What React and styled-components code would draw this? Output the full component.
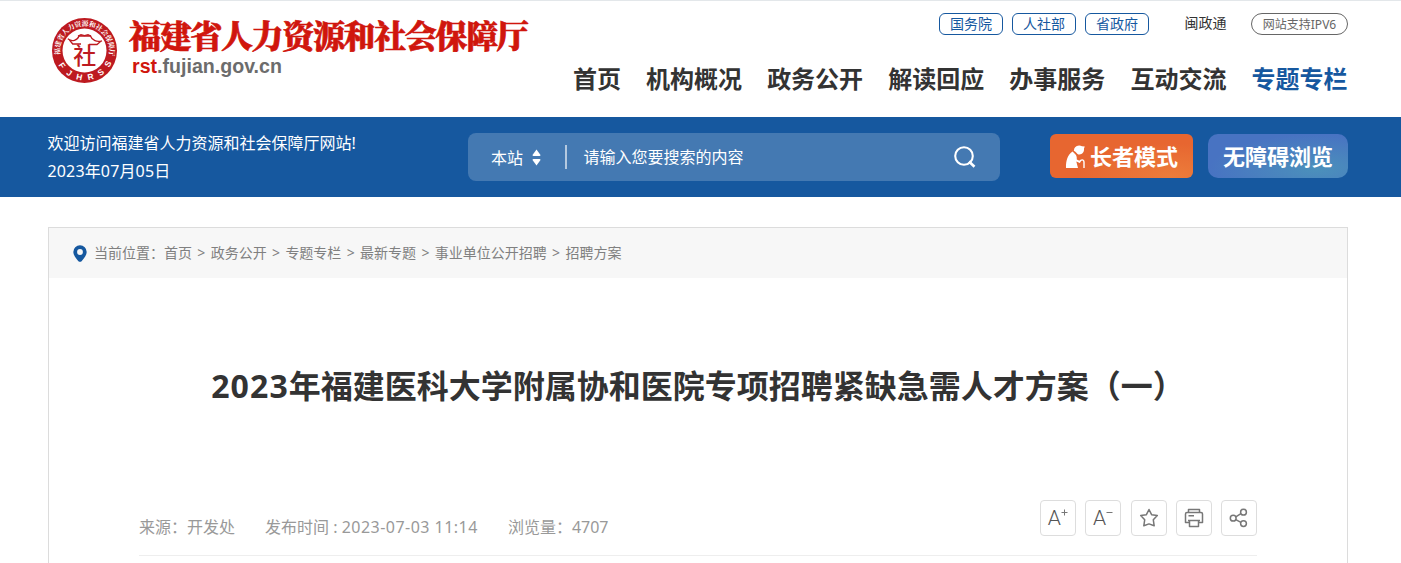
import React from 'react'
import styled, { createGlobalStyle } from 'styled-components'

const GlobalStyle = createGlobalStyle`
  * {
    box-sizing: border-box;
  }
  body {
    margin: 0;
    height: 563px;
    overflow: hidden;
    background: #fff;
    color: #333;
    font-family: "Noto Sans", "Noto Sans CJK SC", sans-serif;
    font-size: 16px;
  }
  a {
    color: inherit;
    text-decoration: none;
  }
`

const Container = styled.div`
  width: 1300px;
  margin-left: 48px;
`

const Header = styled.header`
  height: 117px;
  border-top: 1px solid #e3e7ea;
`

const HeaderInner = styled(Container)`
  display: flex;
  justify-content: space-between;
`

const Brand = styled.a`
  display: flex;
  padding: 15px 0 0 2px;
`

const BrandText = styled.div`
  padding-left: 10px;
`

const BrandName = styled.div`
  height: 40px;
  line-height: 37px;
  font-family: "Noto Serif CJK SC", "Noto Sans CJK SC", sans-serif;
  font-size: 32px;
  font-weight: 900;
  letter-spacing: -1.35px;
  white-space: nowrap;
  color: #d0160d;
  -webkit-text-stroke: 0.7px #d0160d;
`

const BrandUrl = styled.div`
  padding-left: 3px;
  line-height: 20px;
  font-family: "Liberation Sans", Arial, sans-serif;
  font-size: 19.6px;
  font-weight: bold;
  color: #6c6c6c;
  span {
    color: #d0160d;
  }
`

const HeaderRight = styled.div`
  display: flex;
  flex-direction: column;
  align-items: flex-end;
`

const TopLinks = styled.div`
  display: flex;
  padding-top: 12px;
  height: 50px;
`

const TopLink = styled.a`
  width: 64px;
  height: 22px;
  margin-right: 9px;
  border: 1px solid #16589f;
  border-radius: 6px;
  line-height: 20px;
  font-size: 14px;
  text-align: center;
  color: #16589f;
`

const PlainLink = styled.a`
  margin: 0 24.5px 0 26.5px;
  line-height: 20px;
  font-size: 14px;
`

const Ipv6 = styled.span`
  width: 97px;
  height: 22px;
  border: 1px solid #666;
  border-radius: 11px;
  line-height: 21px;
  font-size: 12px;
  text-align: center;
  color: #666;
`

const Nav = styled.nav`
  display: flex;
  gap: 25.1px;
  padding-right: 0.5px;
`

const NavItem = styled.a`
  line-height: 55px;
  font-size: 24px;
  font-weight: bold;
  color: ${({ $active }) => ($active ? '#16589f' : '#333')};
`

const BlueBar = styled.div`
  height: 80px;
  background: #16589f;
  color: #fff;
`

const BarInner = styled(Container)`
  display: flex;
  height: 80px;
`

const Welcome = styled.div`
  width: 420px;
  padding-top: 12px;
  line-height: 28px;
  p {
    margin: 0 0 0 -0.5px;
  }
`

const WelcomeDate = styled.p`
  letter-spacing: 0.15px;
`

const Search = styled.div`
  display: flex;
  align-items: center;
  width: 532px;
  height: 48px;
  margin-top: 16px;
  padding: 0 24px 0 23px;
  border-radius: 8px;
  background: rgba(255, 255, 255, 0.2);
`

const Scope = styled.div`
  display: flex;
  align-items: center;
  width: 74px;
  gap: 9px;
`

const Divider = styled.i`
  width: 2px;
  height: 24px;
  background: rgba(255, 255, 255, 0.6);
`

const Placeholder = styled.span`
  flex: 1;
  padding: 0 0 2px 16.5px;
`

const ModeButton = styled.a`
  display: flex;
  justify-content: center;
  align-items: center;
  gap: 5px;
  width: ${({ $elder }) => ($elder ? '143px' : '140px')};
  height: 44px;
  margin-top: 17px;
  margin-left: ${({ $elder }) => ($elder ? '50px' : '15px')};
  border-radius: ${({ $elder }) => ($elder ? '6px' : '10px')};
  font-size: 22px;
  font-weight: bold;
  line-height: 44px;
  background: ${({ $elder }) =>
    $elder
      ? 'radial-gradient(ellipse at 85% 95%, #ec7c3b 0%, #e76630 55%)'
      : 'radial-gradient(ellipse at 78% 80%, #4b90bb 0%, #4873c2 70%)'};
`

const Panel = styled(Container)`
  height: 336px;
  margin-top: 30px;
  border: 1px solid #dcdcdc;
  border-bottom: 0;
`

const Crumbs = styled.div`
  display: flex;
  align-items: center;
  height: 50px;
  padding: 0 0 2px 24px;
  background: #f7f7f7;
  font-size: 14px;
  color: #808080;
  svg {
    margin: 2px 7px 0 0;
  }
`

const Sep = styled.span`
  width: 18.7px;
  text-align: center;
`

const Title = styled.h1`
  margin: 0;
  padding-top: 84px;
  height: 222px;
  line-height: 48px;
  font-size: 32px;
  font-weight: bold;
  text-align: center;
  white-space: nowrap;
`

const Year = styled.span`
  letter-spacing: 1.1px;
`

const Meta = styled.div`
  display: flex;
  align-items: flex-start;
  height: 56px;
  margin: 0 90px;
  border-bottom: 1px solid #eee;
  color: #999;
`

const MetaItem = styled.span`
  margin-right: 30px;
  line-height: 54px;
`

const PublishTime = styled.span`
  letter-spacing: 0.48px;
`

const Tools = styled.div`
  display: flex;
  gap: 9.2px;
  margin-left: auto;
`

const Tool = styled.button`
  display: flex;
  align-items: center;
  justify-content: center;
  width: 36px;
  height: 36px;
  padding: 0;
  border: 1px solid #ddd;
  border-radius: 4px;
  background: #fff;
  svg {
    fill: none;
    stroke: #777;
    stroke-width: 1.5;
  }
`

const FontTool = styled(Tool)`
  position: relative;
  justify-content: flex-start;
  padding-left: 6.5px;
  font-family: Roboto, sans-serif;
  font-size: 21px;
  font-weight: 300;
  line-height: 34px;
  color: #555;
  svg {
    position: absolute;
    left: 20px;
    top: 8px;
    stroke-width: 1;
  }
`

const navItems = ['首页', '机构概况', '政务公开', '解读回应', '办事服务', '互动交流', '专题专栏']
const crumbs = ['首页', '政务公开', '专题专栏', '最新专题', '事业单位公开招聘', '招聘方案']

const Emblem = () => (
  <svg width="69" height="69" viewBox="0 0 69 69">
    <defs>
      <path id="arcTop" d="M10.6 41 A24.7 24.7 0 1 1 58.4 41" />
      <path id="arcBottom" d="M4.6 34.5 A29.9 29.9 0 0 0 64.4 34.5" />
    </defs>
    <circle cx="34.5" cy="34.5" r="32.5" fill="#bd1a20" />
    <circle cx="34.5" cy="34.5" r="22" fill="#fff" />
    <text fill="#fff" fontFamily="Noto Serif CJK SC, Noto Sans CJK SC, serif" fontSize="7" fontWeight="bold">
      <textPath href="#arcTop" textLength="87" startOffset="2">福建省人力资源和社会保障厅</textPath>
    </text>
    <text fill="#fff" fontFamily="Liberation Sans, sans-serif" fontSize="8.4" fontWeight="bold">
      <textPath href="#arcBottom" textLength="66" startOffset="15">FJHRSS</textPath>
    </text>
    <g fill="none" stroke="#bd1a20" strokeWidth="1.3">
      <path d="M17.8 22.8 C22 26 27.5 24.5 29 20 H40.5 C42 24.5 47 26.5 52 24.8" />
      <path d="M28 20 L31 18.8 L34.5 19.6 L38 18.8 L41 20" />
      <path d="M19.5 24 L22.7 28 H31 M50.5 25.5 L47 28.5 H39" />
    </g>
    <text
      x="34.8"
      y="48"
      textAnchor="middle"
      fill="#bd1a20"
      fontFamily="Noto Sans CJK SC, sans-serif"
      fontSize="23"
      fontWeight="500"
    >
      社
    </text>
  </svg>
)

const SortArrows = () => (
  <svg width="9" height="17" viewBox="0 0 9 17" fill="#fff">
    <path d="M4.5 0.5 L8.5 6 Q8.5 7 7.5 7 H1.5 Q0.5 7 0.5 6 Z" />
    <path d="M4.5 16.5 L8.5 11 Q8.5 10 7.5 10 H1.5 Q0.5 10 0.5 11 Z" />
  </svg>
)

const SearchIcon = () => (
  <svg width="22" height="22" viewBox="0 0 22 22" fill="none" stroke="#fff" strokeWidth="2.1">
    <circle cx="10" cy="10" r="8.8" />
    <path d="M15 15.5 L20.5 20.8" strokeWidth="2.6" />
  </svg>
)

const ElderIcon = () => (
  <svg width="20" height="24" viewBox="0 0 20 24" fill="#fff">
    <path d="M9.3 4.6 C10.6 1.6 14.4 .8 17 2.2 L19.8 2.4 L19 4.6 C19.4 8.6 16.6 11.2 13.3 10.4 C11.6 9.8 11.4 7.8 8.8 6.8 Z" />
    <path d="M7.6 7.6 L11 11 Q12 12.5 11.8 15.6 L15.5 17.2 L14.4 18.8 L11.3 17.6 L13 24 H1 C.8 16.5 2.8 10.4 7.6 7.6 Z" />
    <path d="M14.3 18.6 L15.4 16.6 C17.4 15.2 19 16 19 18 V24" fill="none" stroke="#fff" strokeWidth="1.4" />
  </svg>
)

const PinIcon = () => (
  <svg width="14" height="17" viewBox="0 0 14 17">
    <path
      d="M7 .3 A6.7 6.7 0 0 0 .3 7 C.3 10.5 4.2 15 5.4 16.2 Q7 17.2 8.6 16.2 C9.8 15 13.7 10.5 13.7 7 A6.7 6.7 0 0 0 7 .3 Z M7 4.1 A2.9 2.9 0 1 1 7 9.9 A2.9 2.9 0 0 1 7 4.1 Z"
      fill="#16589f"
      fillRule="evenodd"
    />
  </svg>
)

const App = () => {
  return (
    <>
      <GlobalStyle />
      <Header>
        <HeaderInner>
          <Brand href="#">
            <Emblem />
            <BrandText>
              <BrandName>福建省人力资源和社会保障厅</BrandName>
              <BrandUrl>
                <span>rst</span>.fujian.gov.cn
              </BrandUrl>
            </BrandText>
          </Brand>
          <HeaderRight>
            <TopLinks>
              <TopLink href="#">国务院</TopLink>
              <TopLink href="#">人社部</TopLink>
              <TopLink href="#">省政府</TopLink>
              <PlainLink href="#">闽政通</PlainLink>
              <Ipv6>网站支持IPV6</Ipv6>
            </TopLinks>
            <Nav>
              {navItems.map((item) => (
                <NavItem href="#" key={item} $active={item === '专题专栏'}>
                  {item}
                </NavItem>
              ))}
            </Nav>
          </HeaderRight>
        </HeaderInner>
      </Header>
      <BlueBar>
        <BarInner>
          <Welcome>
            <p>欢迎访问福建省人力资源和社会保障厅网站!</p>
            <WelcomeDate>2023年07月05日</WelcomeDate>
          </Welcome>
          <Search>
            <Scope>
              本站
              <SortArrows />
            </Scope>
            <Divider />
            <Placeholder>请输入您要搜索的内容</Placeholder>
            <SearchIcon />
          </Search>
          <ModeButton href="#" $elder>
            <ElderIcon />
            长者模式
          </ModeButton>
          <ModeButton href="#">无障碍浏览</ModeButton>
        </BarInner>
      </BlueBar>
      <Panel>
        <Crumbs>
          <PinIcon />
          当前位置：
          {crumbs.map((name, i) => (
            <React.Fragment key={name}>
              {i > 0 && <Sep>&gt;</Sep>}
              <a href="#">{name}</a>
            </React.Fragment>
          ))}
        </Crumbs>
        <Title>
          <Year>2023</Year>年福建医科大学附属协和医院专项招聘紧缺急需人才方案（一）
        </Title>
        <Meta>
          <MetaItem>来源：开发处</MetaItem>
          <MetaItem>
            发布时间 : <PublishTime>2023-07-03 11:14</PublishTime>
          </MetaItem>
          <MetaItem>浏览量：4707</MetaItem>
          <Tools>
            <FontTool>
              A
              <svg width="7" height="7" viewBox="0 0 7 7">
                <path d="M.5 3.5 H6.5 M3.5 .5 V6.5" />
              </svg>
            </FontTool>
            <FontTool>
              A
              <svg width="7" height="7" viewBox="0 0 7 7">
                <path d="M.5 3.5 H6.5" />
              </svg>
            </FontTool>
            <Tool>
              <svg width="20" height="20" viewBox="0 0 20 20" strokeLinejoin="round">
                <path d="M10 1.5 L12.6 6.7 L18.3 7.6 L14.3 11.8 L15.2 17.8 L10 15.9 L4.8 17.8 L5.7 11.8 L1.7 7.6 L7.4 6.7 Z" />
              </svg>
            </Tool>
            <Tool>
              <svg width="20" height="20" viewBox="0 0 20 20" strokeLinejoin="round">
                <path d="M4.5 4.5 V1.5 H15.5 V4.5 M5 14.5 H1.5 V6 Q1.5 4.5 3 4.5 H17 Q18.5 4.5 18.5 6 V14.5 H15 M4.5 7.7 H10 M4 12.5 H16 M5.5 12.5 V18.5 H14.5 V12.5" />
              </svg>
            </Tool>
            <Tool>
              <svg width="20" height="20" viewBox="0 0 20 20">
                <circle cx="4.2" cy="10.2" r="2.9" />
                <circle cx="14.5" cy="4.2" r="2.9" />
                <circle cx="14.5" cy="15.6" r="2.9" />
                <path d="M6.8 8.8 L11.9 5.7 M6.8 11.6 L11.9 14.3" />
              </svg>
            </Tool>
          </Tools>
        </Meta>
      </Panel>
    </>
  )
}

export default App
